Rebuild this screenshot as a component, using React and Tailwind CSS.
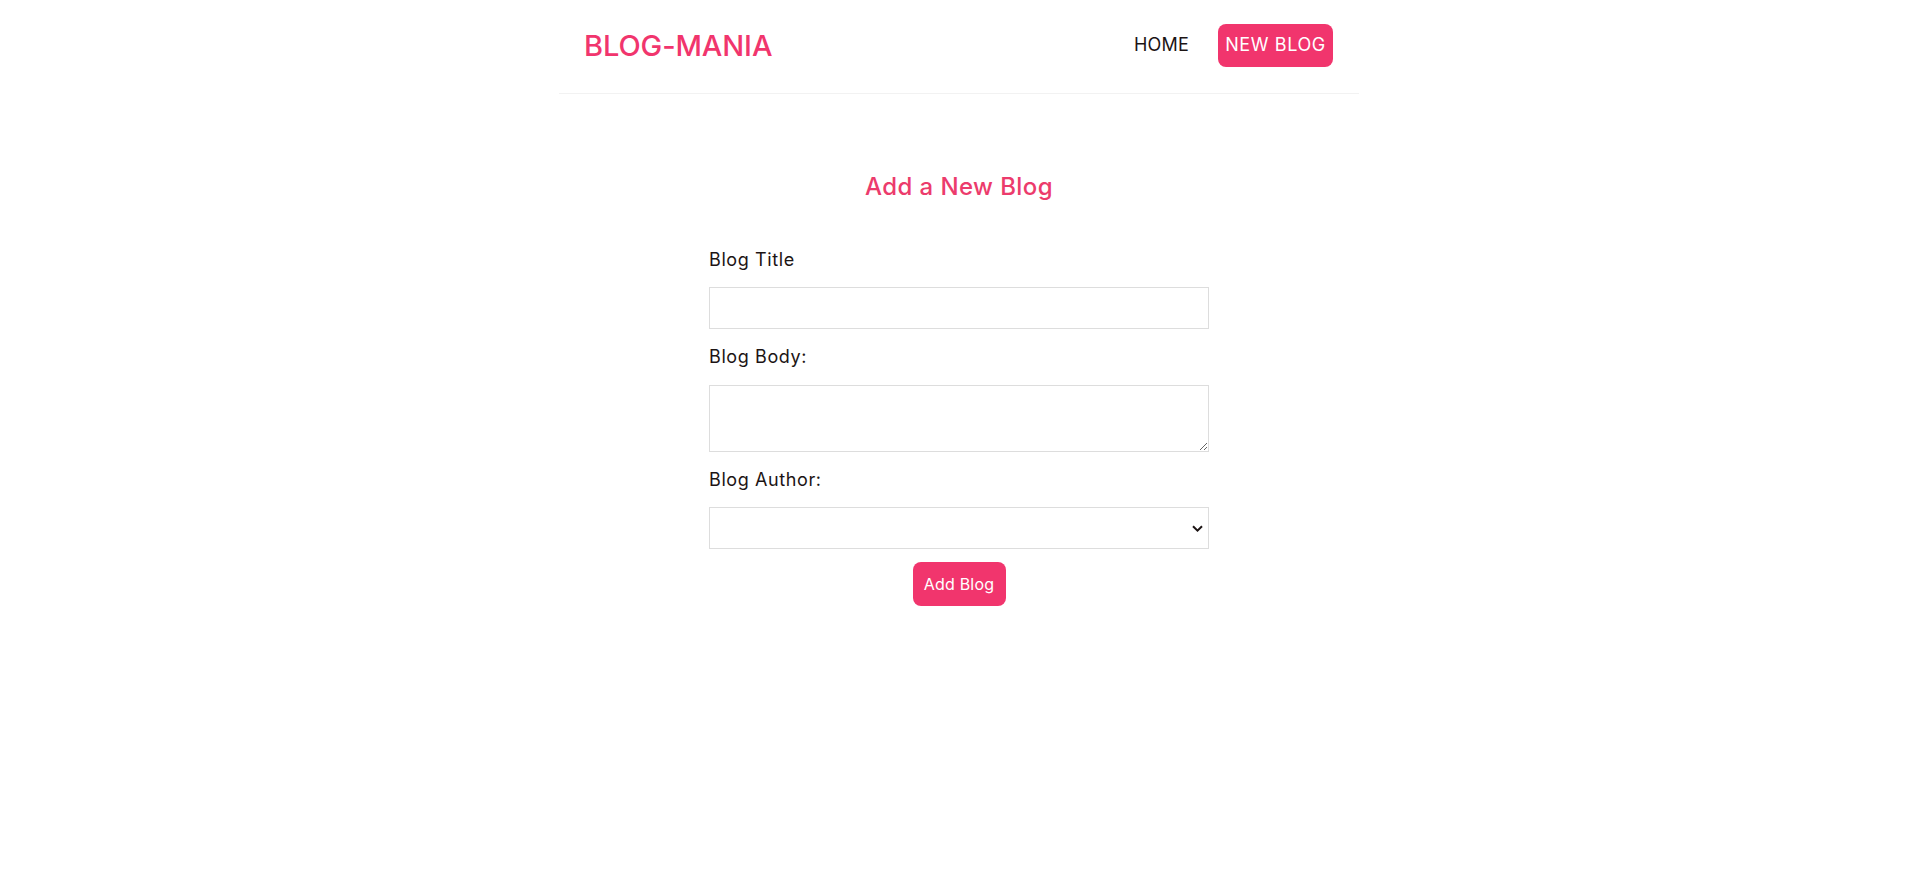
import React from "react";

export default function App() {
  return (
    <div className="min-h-[877px] w-full bg-white text-[#1c1414]" style={{ fontFamily: "Inter, 'Noto Sans', sans-serif" }}>
      <nav className="mx-auto flex h-[94px] max-w-[800px] items-center border-b border-[#f2f2f2] pb-[3px] pl-[25px] pr-[26px]">
        <h1 className="text-[29px] font-medium leading-none tracking-[-0.1px] text-[#f1356d]">BLOG-MANIA</h1>
        <div className="ml-auto flex items-center">
          <a className="text-[18px] leading-none tracking-[0.2px] text-[#1c1414]" href="#">HOME</a>
          <a className="ml-[29px] flex h-[43px] w-[115px] items-center justify-center rounded-[8px] bg-[#f1356d] text-[18px] leading-none tracking-[0.6px] text-white" href="#">NEW BLOG</a>
        </div>
      </nav>
      <div className="mx-auto flex w-[500px] flex-col">
        <h2 className="mt-[77px] text-center text-[24px] font-medium leading-[32px] tracking-[0.4px] text-[#ec3b6c]">Add a New Blog</h2>
        <form className="mt-[43px] flex flex-col" onSubmit={(e) => e.preventDefault()}>
          <label className="block text-[18px] leading-[28px] tracking-[0.6px]">Blog Title</label>
          <input type="text" className="mt-[13px] block h-[42px] w-full border border-[#ddd] bg-white px-[10px] outline-none" />
          <label className="mt-[14px] block text-[18px] leading-[28px] tracking-[0.6px]">Blog Body:</label>
          <textarea className="mt-[14px] block h-[67px] w-full border border-[#ddd] bg-white px-[10px] py-[6px] outline-none"></textarea>
          <label className="mt-[14px] block text-[18px] leading-[28px] tracking-[0.6px]">Blog Author:</label>
          <div className="relative mt-[13px]">
            <select className="block h-[42px] w-full appearance-none border border-[#ddd] bg-white px-[6px] text-[16px] outline-none">
              <option value=""></option>
            </select>
            <svg className="pointer-events-none absolute right-[6px] top-[18px]" width="11" height="7" viewBox="0 0 11 7" fill="none">
              <path d="M1 1.2 L5.5 5.6 L10 1.2" stroke="#1c1414" strokeWidth="2" strokeLinejoin="miter" />
            </svg>
          </div>
          <div className="mt-[13px] flex justify-center">
            <button type="submit" className="flex h-[44px] w-[93px] items-center justify-center rounded-[8px] bg-[#f1356d] text-[16px] tracking-[0.2px] text-white">Add Blog</button>
          </div>
        </form>
      </div>
    </div>
  );
}
